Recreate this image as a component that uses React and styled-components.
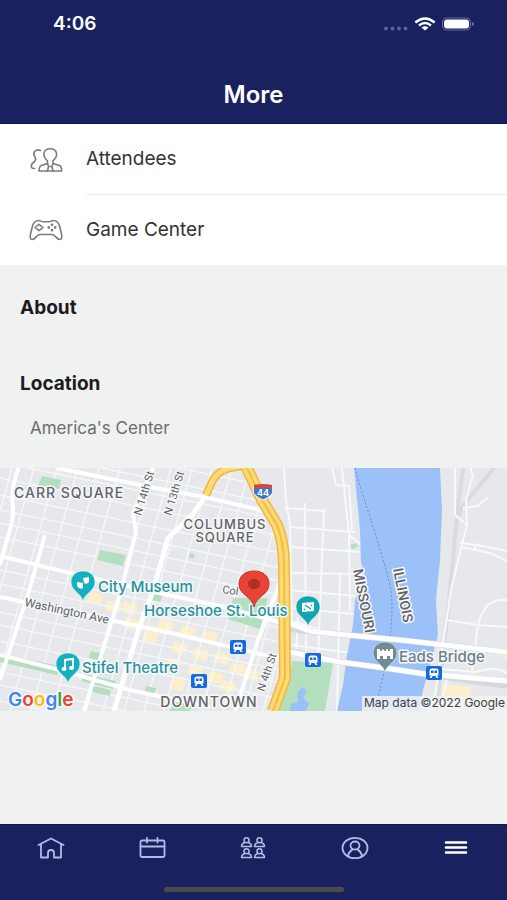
import React from "react";
import styled, { createGlobalStyle } from "styled-components";

const GlobalStyle = createGlobalStyle`
  * { box-sizing: border-box; }
  body {
    margin: 0;
    background: #f0f1f1;
    font-family: Inter, "Liberation Sans", sans-serif;
    color: #1c1c1e;
  }
`;

const Screen = styled.div`
  min-height: 100vh;
  display: flex;
  flex-direction: column;
`;

const Header = styled.header`
  background: #19215f;
  color: #fff;
  height: 124px;
  border-bottom: 1px solid #10154c;
`;

const StatusBar = styled.div`
  display: flex;
  justify-content: space-between;
  align-items: center;
  height: 48px;
  padding: 0 32px 0 53px;
`;

const Clock = styled.time`
  font-size: 19px;
  line-height: 20px;
  font-weight: 600;
`;

const StatusIcons = styled.svg`
  display: block;
  width: 92px;
  height: 16px;
`;

const Title = styled.h1`
  margin: 32px 0 0;
  font-size: 24px;
  line-height: 30px;
  font-weight: 600;
  text-align: center;
`;

const Main = styled.main`
  flex: 1;
`;

const Menu = styled.ul`
  list-style: none;
  margin: 0;
  padding: 0;
  background: #fff;
`;

const MenuItem = styled.li`
  display: grid;
  grid-template-columns: 86px 1fr;
`;

const MenuLink = styled.a`
  display: grid;
  grid-column: 1 / -1;
  grid-template-columns: subgrid;
  align-items: center;
  color: #333336;
  font-size: 19px;
  line-height: 24px;
  text-decoration: none;
`;

const MenuIcon = styled.svg`
  width: 36px;
  height: 28px;
  margin-left: 28px;
  fill: none;
  stroke: #7b7c80;
  stroke-width: 1.6;
  stroke-linecap: round;
  stroke-linejoin: round;
`;

const MenuLabel = styled.span`
  padding: 23px 0;
  border-bottom: ${(p) => (p.$divided ? "1px solid #ececee" : "0")};
`;

const Section = styled.section`
  padding: ${(p) => (p.$last ? "24px 20px 28px" : "31px 20px 28px")};
`;

const Heading = styled.h2`
  margin: 0;
  font-size: 19px;
  line-height: 24px;
  font-weight: 700;
`;

const Place = styled.p`
  margin: 20px 0 0 10px;
  font-size: 17px;
  line-height: 24px;
  color: #6c6c70;
`;

const MapView = styled.svg`
  display: block;
  width: 100%;
  height: 243px;
  background: #e6e8eb;
`;

const MapText = styled.text`
  font-family: ${(p) => (p.$street ? "Roboto" : "Inter")}, "Liberation Sans", sans-serif;
  font-size: ${(p) => p.$size || 15}px;
  font-weight: ${(p) => p.$weight || 500};
  fill: ${(p) => p.$color || "#5f6368"};
  letter-spacing: ${(p) => (p.$district ? "1px" : "normal")};
  stroke: ${(p) => (p.$plain ? "none" : "#f6f7f8")};
  stroke-width: 3px;
  stroke-linejoin: round;
  paint-order: stroke;
`;

const Footer = styled.footer`
  background: #19215f;
  height: 76px;
  border-top: 1px solid #10154c;
  display: flex;
  flex-direction: column;
  justify-content: space-between;
  align-items: center;
  padding-bottom: 8px;
`;

const Tabs = styled.nav`
  display: grid;
  grid-template-columns: repeat(5, 1fr);
  width: 100%;
`;

const Tab = styled.button`
  display: flex;
  justify-content: center;
  align-items: center;
  height: 46px;
  padding: 0;
  border: 0;
  background: none;
  color: ${(p) => (p.$active ? "#fff" : "#b4bae6")};
  cursor: pointer;
`;

const TabIcon = styled.svg`
  width: 28px;
  height: 24px;
  fill: none;
  stroke: currentColor;
  stroke-width: ${(p) => p.$stroke || 1.8};
  stroke-linecap: round;
  stroke-linejoin: round;
`;

const HomeIndicator = styled.div`
  width: 180px;
  height: 5px;
  border-radius: 3px;
  background: #4b4b50;
`;

const menu = [
  {
    label: "Attendees",
    icon: (
      <>
        <path d="M12.500 4.500C7.500 2.500 4.500 6.500 6.500 10C8 12.500 8 14.500 6 16C4 17.200 3.200 18.500 3.300 20.500C3.300 22 4.500 22.500 6.500 22.500" />
        <path d="M19.500 14.800C13.500 9.500 15.500 2.700 22.200 2.700S31 9.500 25 14.800V17.500L31.500 19.500C33.200 20.200 33.700 22 33.700 25H11C11 22 11.800 20.300 13.300 19.600L19.500 17.500Z" />
        <path d="M19.500 17.500L20.500 20.500H24L25 17.500M20.500 20.500L19.500 25M24 20.500L25 25" />
      </>
    ),
  },
  {
    label: "Game Center",
    icon: (
      <>
        <path d="M10.500 4.500C12.500 4.500 13 5.800 15 5.800H21C23 5.800 23.500 4.500 25.500 4.500C29 4.500 30.500 6.500 31.500 10L33.500 18C34.300 21.500 33.800 23.500 31.600 23.500C28.500 23.500 27.500 18.500 24 18.500H12C8.500 18.500 7.500 23.500 4.400 23.500C2.200 23.500 1.700 21.500 2.500 18L4.500 10C5.500 6.500 7 4.500 10.500 4.500Z" />
        <path d="M11 8.300L15 11.500L11 14.700L7 11.500Z" />
        <circle cx="24" cy="8.800" r=".6" />
        <circle cx="24" cy="14.200" r=".6" />
        <circle cx="20.800" cy="11.500" r=".6" />
        <circle cx="27.200" cy="11.500" r=".6" />
      </>
    ),
  },
];

const person = (x, y) => (
  <g key={`${x}-${y}`} transform={`translate(${x} ${y})`}>
    <circle cx="0" cy="2.700" r="2.500" />
    <path d="M-1.700 5C-4.500 5.800-5 7.500-5 9H5C5 7.500 4.500 5.800 1.700 5" />
  </g>
);

const tabs = [
  {
    label: "Home",
    icon: (
      <path d="M1.500 9L14 2.500L26.500 9M4 8.500V21.500H11V17C11 13 17 13 17 17V21.500H24V8.500" />
    ),
  },
  {
    label: "Schedule",
    icon: (
      <>
        <rect x="2.500" y="4.500" width="24" height="16.500" rx="1.500" />
        <path d="M2.500 10.500H26.500M9 2V6.500M19.500 2V6.500" />
      </>
    ),
  },
  {
    label: "Groups",
    stroke: 1.5,
    icon: [person(7.500, 1.500), person(20.500, 1.500), person(7.500, 12.500), person(20.500, 12.500)],
  },
  {
    label: "Profile",
    icon: (
      <>
        <ellipse cx="14" cy="12" rx="12.500" ry="10.200" />
        <ellipse cx="14" cy="9.500" rx="4.500" ry="4" />
        <path d="M7 20C7.500 16 10 14.500 11.500 13.500M21 20C20.500 16 18 14.500 16.500 13.500" />
      </>
    ),
  },
  {
    label: "More",
    active: true,
    stroke: 2.600,
    icon: <path d="M4 6.500H24M4 11.500H24M4 16.500H24" />,
  },
];

const crossStreets = [
  430, 446, 461, 477, 494, 509, 522, 536, 569, 583, 611, 624, 640, 671, 684, 700,
];
const avenues = [
  12, 34, 57, 78, 99, 120, 154, 171, 192, 212, 232, 250, 270, 291, 312, 331, 352, 370,
];

const downtownBlocks = [
  [90, 592], [124, 602], [108, 600], [160, 619], [182, 625], [204, 630], [145, 630],
  [174, 642], [195, 648], [216, 652], [168, 657], [190, 664], [210, 671],
  [222, 680], [232, 662], [172, 678], [246, 668], [228, 694], [126, 617],
];

const Pin = ({ x, y, color, children }) => (
  <g transform={`translate(${x} ${y})`}>
    <path
      d="M0 18C-2 10-12 8-12-1C-12-7.500-7-12-0-12S12-7.500 12-1C12 8 2 10 0 18Z"
      fill={color}
      stroke="#fff"
      strokeOpacity=".5"
    />
    {children}
  </g>
);

const Station = ({ x, y }) => (
  <g transform={`translate(${x} ${y})`}>
    <rect x="-8" y="-7" width="16" height="14" rx="2" fill="#1668e3" />
    <path
      d="M-4.500-2.500Q-4.500-4.500-2-4.500H2Q4.500-4.500 4.500-2.500V2.500H3L4.500 5H2.500L1.500 3H-1.500L-2.500 5H-4.500L-3 2.500H-4.500Z"
      fill="#fff"
    />
    <path d="M-3-2.500H-.500V0H-3ZM.500-2.500H3V0H.500Z" fill="#1668e3" />
  </g>
);

const LocationMap = () => (
  <MapView
    viewBox="0 468 507 243"
    preserveAspectRatio="xMidYMid slice"
    role="img"
    aria-label="Map of downtown St. Louis around America's Center"
  >
    <defs>
      <clipPath id="city">
        <path d="M0 468H245L276 520L284 560V670L270 711H0Z" />
      </clipPath>
    </defs>

    <g fill="#fbf0cb">
      {downtownBlocks.map(([x, y]) => (
        <path key={`${x}-${y}`} d={`M${x} ${y}l14 3l-3 10l-14-3z`} />
      ))}
      <path d="M443 684L472 687L469 700H441ZM500 650L507 652V658L498 655Z" />
    </g>

    <g clipPath="url(#city)" stroke="#f5f6f8" fill="none" strokeWidth="1.500">
      {crossStreets.map((y) => (
        <path key={y} d={`M-5 ${y}L295 ${y + 62}`} />
      ))}
      {avenues.map((x) => (
        <path key={x} d={`M${x} 468L${x - 68} 711`} />
      ))}
    </g>

    <g fill="#b3dfbf">
      <path d="M42 476L61 480L59 489L38 486Z" />
      <path d="M100 550L126 555L123 566L97 560Z" />
      <path d="M233 598L268 598L260 629L228 619Z" />
      <path d="M0 654L60 666L57 675L0 662Z" />
      <path d="M84 674L116 681L113 689L81 681ZM91 651L104 654L101 661L89 658ZM93 686L111 690L110 696L92 692ZM146 686L156 688L153 696L144 693ZM155 592L163 594L160 602L152 600Z" />
      <path d="M190 553L195 555L193 559L189 557ZM350 545L356 543L358 547L352 549Z" />
      <path d="M292 661L333 663L325 711H279L290 679Z" />
      <path d="M174 701L192 705L190 711H170Z" />
    </g>
    <path
      d="M303 687L307 692L303 698L309 703L306 711H290L291 704L298 702L297 693Z"
      fill="#9ac0f8"
    />

    <g clipPath="url(#city)" stroke="#fff" strokeWidth="4" fill="none">
      <path d="M19 466C9 495 13 500 13 510C14 518 10 529 0 565" />
      <path d="M57 468L155 488L205 497L256 509L290 522" />
      <path d="M0 556L70 573L145 590L220 606L290 625" />
      <path d="M0 597L110 620L180 635L290 661" />
      <path d="M0 655L60 670L130 690L210 707" />
      <path d="M153 468L133 513L136 532L121 591L84 711" />
      <path d="M205 497L192 515L168 538L153 591L139 628L114 711" strokeWidth="5" />
      <path d="M45 535L29 591L0 680" />
      <path d="M281 580L258 640L235 711" />
    </g>

    <g stroke="#f8f9fb" strokeWidth="2" fill="none">
      <path d="M284 468L286 500L290 525L292 632M284 508L324 511M324 508L318 660M305 503L306 660M289 527L355 532M290 547L360 552M290 573L357 574M290 590L355 596M290 608L354 614M342 468L349 535L350 610M292 645L352 653M298 617L296 655M332 468L336 485L349 486L352 530" />
      <path d="M291 621L318 629M349 535L362 545M340 575L337 711" />
    </g>

    <path
      d="M354 468H440L442 510L440 560L436 600L438 635L430 665L423 690L419 711H337L343 685L347 655L353 625L355 600L365 577L361 562L360 530Z"
      fill="#9cc1f9"
    />
    <path
      d="M355 468C365 505 382 550 391 590C394 615 390 640 385 668L375 711"
      fill="none"
      stroke="#6c8dbf"
      strokeDasharray="2 2"
    />

    <g fill="none" stroke="#d9dbdf" strokeWidth="4">
      <path d="M463 468L457 515L452 570L447 620L436 711" />
      <path d="M494 468L462 507L457 520" />
    </g>
    <g fill="none" stroke="#f8f9fb" strokeWidth="2">
      <path d="M455 468V515L467 525L461 548L451 590L442 650L433 711M470 468L473 475L466 500L467 525M463 508L478 506L488 497M460 543L478 545L507 551M462 547L475 550L490 553L507 561M475 544V550" />
      <path d="M507 600C485 598 478 615 476 640L472 672M447 620L478 625L507 627M442 669L475 672Q500 665 507 674M472 676Q490 690 507 680M448 675L441 705" />
    </g>
    <g fill="none" stroke="#d5d8dc" strokeWidth="6">
      <path d="M289 629L336 634L400 640L507 652" />
      <path d="M289 651L340 662L385 668L425 674L507 686" />
    </g>
    <g fill="none" stroke="#fff" strokeWidth="5">
      <path d="M285 622L310 631L336 634L400 640L507 652" />
      <path d="M285 651L340 662L385 668L425 674L507 681" />
    </g>

    <g fill="none" strokeLinejoin="round">
      <path d="M246 466C224 467 217 473 213 480L206 495" stroke="#efb83a" strokeWidth="8" />
      <path d="M246 466C224 467 217 473 213 480L206 495" stroke="#fdd978" strokeWidth="5" />
      <path d="M246 466L262 500L277 525Q284 542 284 565L285 678L273 711" stroke="#efb83a" strokeWidth="12" />
      <path d="M246 466L262 500L277 525Q284 542 284 565L285 678L273 711" stroke="#fdd978" strokeWidth="9" />
      <path d="M246 466L262 500L277 525Q284 542 284 565L285 678L273 711" stroke="#f5bd3d" strokeWidth="2" />
    </g>

    <g>
      <path d="M254 486H272Q274 492 271 495Q268 498 263 500Q258 498 255 495Q252 492 254 486Z" fill="#3c78cf" stroke="#fff" />
      <path d="M254 485Q263 483 272 485V488H254Z" fill="#d9443f" />
      <MapText x="263" y="496" textAnchor="middle" $size={9} $weight={700} $color="#fff" $plain>44</MapText>
    </g>

    <MapText x="14" y="498" $size={14} $district>CARR SQUARE</MapText>
    <MapText x="225" y="529" textAnchor="middle" $size={13} $district>COLUMBUS</MapText>
    <MapText x="225" y="542" textAnchor="middle" $size={13} $district>SQUARE</MapText>
    <MapText x="209" y="707" textAnchor="middle" $size={14} $district>DOWNTOWN</MapText>
    <MapText transform="translate(141 516) rotate(-73)" $size={11} $weight={400} $street>N 14th St</MapText>
    <MapText transform="translate(171 516) rotate(-73)" $size={11} $weight={400} $street>N 13th St</MapText>
    <MapText transform="translate(264 692) rotate(-71)" $size={11} $weight={400} $street>N 4th St</MapText>
    <MapText transform="translate(24 606) rotate(12)" $size={12} $weight={400} $street>Washington Ave</MapText>
    <MapText transform="translate(222 593) rotate(8)" $size={11} $weight={400} $street>Col</MapText>
    <MapText transform="translate(353 570) rotate(79)" $size={14} $weight={500} $street>MISSOURI</MapText>
    <MapText transform="translate(393 569) rotate(79)" $size={14} $weight={500} $street>ILLINOIS</MapText>
    <MapText x="98" y="592" $color="#25939c">City Museum</MapText>
    <MapText x="144" y="616" $color="#25939c">Horseshoe St. Louis</MapText>
    <MapText x="82" y="673" $color="#25939c">Stifel Theatre</MapText>
    <MapText x="399" y="662" $color="#6d7f88">Eads Bridge</MapText>

    <Pin x={83} y={583} color="#13b1c0">
      <path d="M-6-1L0 0V5Q-3 7-6 3ZM0-5L6-6V-1Q4 2 1 0Z" fill="#fff" />
    </Pin>
    <Pin x={68} y={665} color="#13b1c0">
      <path d="M-3 4V-5L5-6V3" fill="none" stroke="#fff" strokeWidth="2" />
      <ellipse cx="-4" cy="4" rx="2.500" ry="2" fill="#fff" />
      <ellipse cx="3.500" cy="3" rx="2.500" ry="2" fill="#fff" />
    </Pin>
    <Pin x={308} y={608} color="#13a5b2">
      <path d="M-6-5L6-6V3L-6 4Z" fill="#fff" />
      <path d="M-3-3L0-1M3 1L0-1M3-3L4-2M-3 2L-4 1" stroke="#13a5b2" strokeWidth="1.500" />
    </Pin>
    <Pin x={385} y={654} color="#6e8c91">
      <path d="M-8 5V-5H-5V-3H-3V-5H-2Q0-1 2-5H3V-3H5V-5H8V5H5V2H2V5H-2V2H-5V5Z" fill="#fff" />
    </Pin>
    <Station x={238} y={647} />
    <Station x={313} y={660} />
    <Station x={199} y={681} />
    <Station x={434} y={673} />

    <path d="M254 607C252 596 239 595 239 584C239 576 245 571 254 571S269 576 269 584C269 595 256 596 254 607Z" fill="#e94335" stroke="#c5352a" />
    <ellipse cx="254" cy="584" rx="6" ry="5" fill="#b02f25" />

    <MapText x="8" y="706" $size={19} $weight={600}>
      <tspan fill="#4285f4">G</tspan>
      <tspan fill="#ea4335">o</tspan>
      <tspan fill="#fbbc04">o</tspan>
      <tspan fill="#4285f4">g</tspan>
      <tspan fill="#34a853">l</tspan>
      <tspan fill="#ea4335">e</tspan>
    </MapText>
    <rect x="362" y="696" width="145" height="15" fill="#f1f2f3" fillOpacity=".85" />
    <MapText x="505" y="707" textAnchor="end" $size={12} $weight={400} $color="#3c4043" $plain>Map data ©2022 Google</MapText>
  </MapView>
);

export default function App() {
  return (
    <Screen>
      <GlobalStyle />
      <Header>
        <StatusBar>
          <Clock>4:06</Clock>
          <StatusIcons viewBox="0 0 92 16" role="img" aria-label="Wi-Fi on, battery full">
            <g fill="#5b6298">
              <circle cx="3" cy="12.500" r="2" />
              <circle cx="9.500" cy="12.500" r="2" />
              <circle cx="16" cy="12.500" r="2" />
              <circle cx="22.500" cy="12.500" r="2" />
            </g>
            <g fill="none" stroke="#fff" strokeWidth="2.400">
              <path d="M32.300 6.500Q42 -1.500 51.700 6.500" />
              <path d="M36 9.500Q42 4.500 48 9.500" />
            </g>
            <path d="M38.500 11.500Q42 9 45.500 11.500L42 14.500Z" fill="#fff" />
            <rect x="59.500" y="2" width="28" height="12" rx="4" fill="none" stroke="#6a70a3" />
            <rect x="61" y="3.500" width="25" height="9" rx="3" fill="#fff" />
            <path d="M89 6V10Q91 9.500 91 8T89 6Z" fill="#6a70a3" />
          </StatusIcons>
        </StatusBar>
        <Title>More</Title>
      </Header>

      <Main>
        <Menu>
          {menu.map(({ label, icon }, i) => (
            <MenuItem key={label}>
              <MenuLink href="#">
                <MenuIcon viewBox="0 0 36 28" aria-hidden="true">{icon}</MenuIcon>
                <MenuLabel $divided={i < menu.length - 1}>{label}</MenuLabel>
              </MenuLink>
            </MenuItem>
          ))}
        </Menu>
        <Section>
          <Heading>About</Heading>
        </Section>
        <Section $last>
          <Heading>Location</Heading>
          <Place>America's Center</Place>
        </Section>
        <LocationMap />
      </Main>

      <Footer>
        <Tabs aria-label="Main">
          {tabs.map(({ label, icon, active, stroke }) => (
            <Tab
              key={label}
              type="button"
              aria-label={label}
              aria-current={active ? "page" : undefined}
              $active={active}
            >
              <TabIcon viewBox="0 0 28 24" $stroke={stroke} aria-hidden="true">{icon}</TabIcon>
            </Tab>
          ))}
        </Tabs>
        <HomeIndicator />
      </Footer>
    </Screen>
  );
}
